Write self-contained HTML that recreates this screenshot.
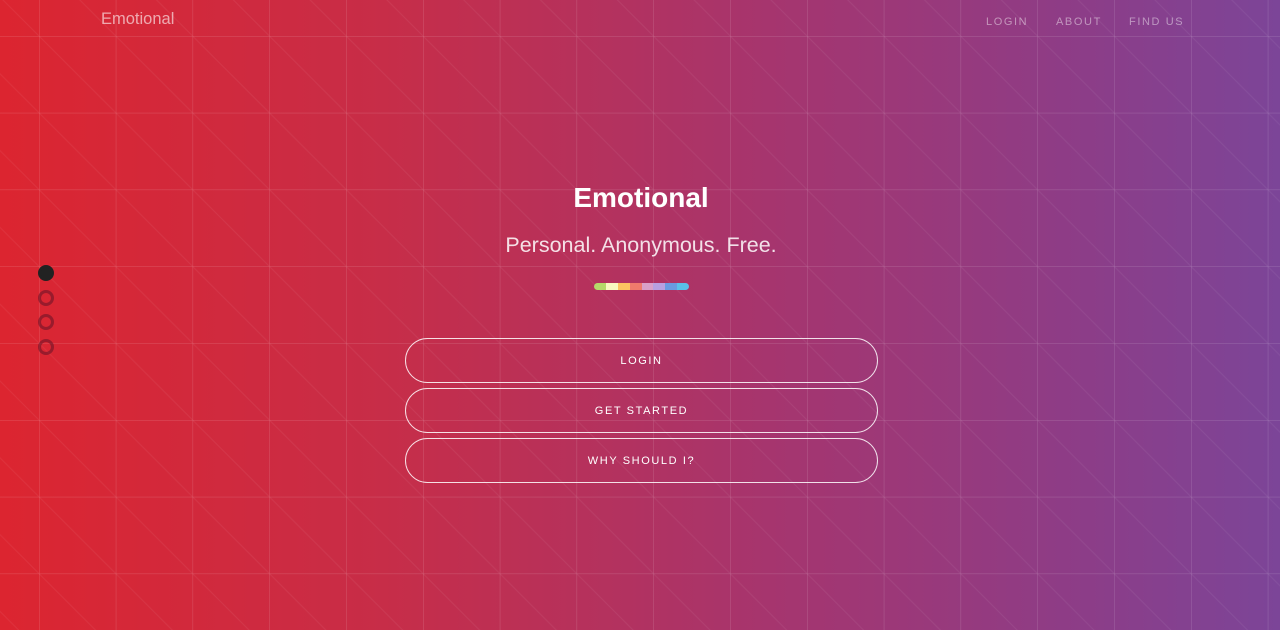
<!DOCTYPE html>
<html><head><meta charset="utf-8"><style>
html,body{margin:0;width:1280px;height:630px;overflow:hidden}
body{background:linear-gradient(90deg,#dc2530 0%,#c72d48 30%,#a6356e 60%,#8c3d88 85%,#7c4598 100%);font-family:"Liberation Sans",sans-serif;position:relative}
svg.g{position:absolute;left:0;top:0}
.brand{position:absolute;left:101px;top:10px;font-size:16.5px;color:rgba(255,255,255,.6)}
.nav{position:absolute;top:16px;font-size:11px;letter-spacing:1.6px;color:rgba(255,255,255,.45)}
h1{position:absolute;left:0;width:1282px;top:182px;margin:0;text-align:center;color:#fff;font-size:28px;font-weight:bold}
.sub{position:absolute;left:0;width:1282px;top:233px;text-align:center;color:rgba(255,255,255,.85);font-size:21.5px}
.bar{position:absolute;left:594px;top:283px;width:95px;height:7px;border-radius:4px;overflow:hidden;display:flex}
.bar i{flex:1}
.btn{position:absolute;left:405px;width:471px;height:43px;border:1.5px solid rgba(255,255,255,.85);border-radius:23px;color:#fff;font-size:11px;letter-spacing:1.6px;text-align:center;line-height:44px;box-sizing:content-box}
.dot{position:absolute;left:38px;width:10px;height:10px;border-radius:50%;border:3px solid rgba(110,20,40,.6)}
</style></head><body>
<svg class="g" width="1280" height="630">
<defs><pattern id="p" x="39" y="36" width="76.8" height="76.8" patternUnits="userSpaceOnUse">
<path d="M0 0H76.8M0 0V76.8" stroke="rgba(255,255,255,.2)" stroke-width="1" fill="none"/>
<path d="M0 0L76.8 76.8" stroke="rgba(255,255,255,.06)" stroke-width="1" fill="none"/>
</pattern></defs>
<rect width="1280" height="630" fill="url(#p)"/>
</svg>
<div class="brand">Emotional</div>
<div class="nav" style="left:986px">LOGIN</div>
<div class="nav" style="left:1056px">ABOUT</div>
<div class="nav" style="left:1129px">FIND US</div>
<div class="dot" style="top:265px;background:#222;border-color:#222"></div>
<div class="dot" style="top:290px"></div>
<div class="dot" style="top:314px"></div>
<div class="dot" style="top:339px"></div>
<h1>Emotional</h1>
<div class="sub">Personal. Anonymous. Free.</div>
<div class="bar"><i style="background:#b5d96a"></i><i style="background:#f8f8c0"></i><i style="background:#fcc461"></i><i style="background:#f07a6c"></i><i style="background:#d9a0c8"></i><i style="background:#b7a0e0"></i><i style="background:#6a9ae0"></i><i style="background:#5ac0e8"></i></div>
<div class="btn" style="top:338px">LOGIN</div>
<div class="btn" style="top:388px">GET STARTED</div>
<div class="btn" style="top:438px">WHY SHOULD I?</div>
</body></html>
